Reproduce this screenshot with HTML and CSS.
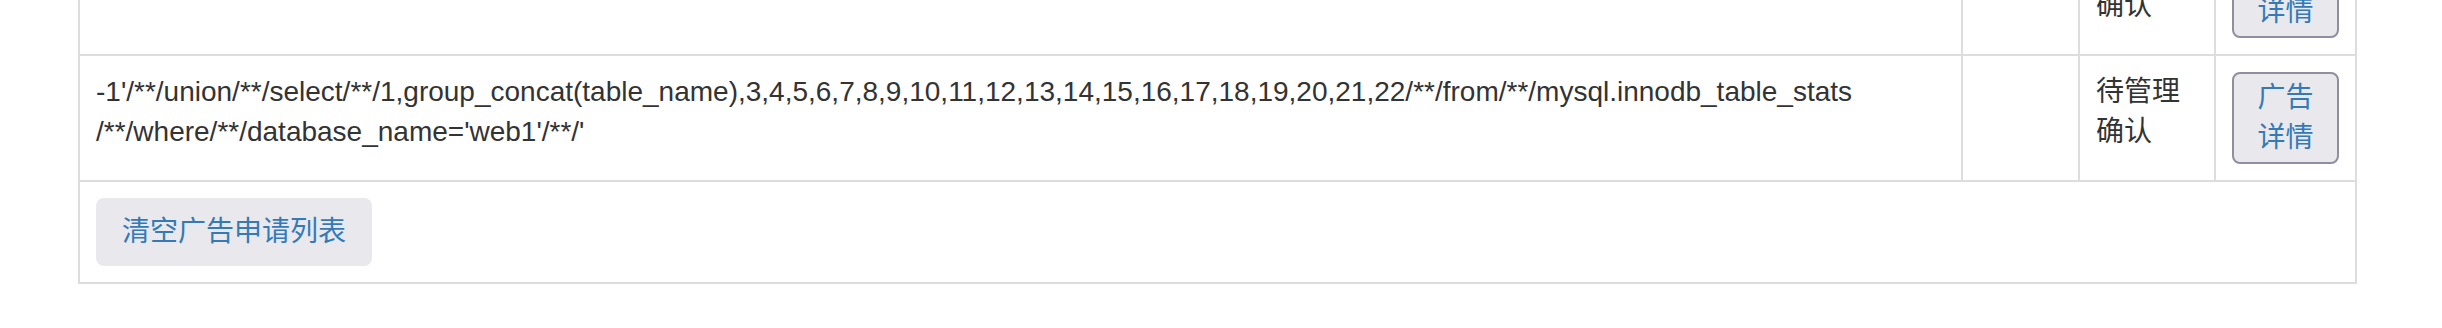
FILE: index.html
```html
<!DOCTYPE html>
<html lang="zh-CN">
<head>
<meta charset="utf-8">
<title>广告申请列表</title>
<link rel="stylesheet" href="styles.css">
</head>
<body>
<div class="page">
  <table class="ads">
    <colgroup>
      <col class="c-content">
      <col class="c-extra">
      <col class="c-status">
      <col class="c-action">
    </colgroup>
    <tbody>
      <tr>
        <td class="payload"></td>
        <td></td>
        <td class="status">待管理确认</td>
        <td><button class="detail" type="button">广告详情</button></td>
      </tr>
      <tr>
        <td class="payload"><span class="line">-1'/**/union/**/select/**/1,group_concat(table_name),3,4,5,6,7,8,9,10,11,12,13,14,15,16,17,18,19,20,21,22/**/from/**/mysql.innodb_table_stats</span><br><span class="line">/**/where/**/database_name='web1'/**/'</span></td>
        <td></td>
        <td class="status">待管理确认</td>
        <td><button class="detail" type="button">广告详情</button></td>
      </tr>
      <tr>
        <td class="foot" colspan="4"><button class="clear" type="button">清空广告申请列表</button></td>
      </tr>
    </tbody>
  </table>
</div>
</body>
</html>
```
FILE: styles.css
```css
html, body {
  margin: 0;
  padding: 0;
  background: #fff;
}
body {
  font-family: "Liberation Sans", "Noto Sans CJK SC", sans-serif;
  font-size: 28px;
  line-height: 40px;
  color: #333;
  overflow: hidden;
}
.page {
  padding-left: 78px;
}
.ads {
  width: 2279px;
  margin-top: -72px;
  border-collapse: collapse;
  table-layout: fixed;
  border: 2px solid #ddd;
}
.c-content { width: 1883px; }
.c-extra { width: 117px; }
.c-status { width: 136px; }
.c-action { width: 141px; }
.ads td {
  border: 2px solid #ddd;
  padding: 16px;
  vertical-align: top;
}
.line {
  white-space: nowrap;
}
.detail {
  font-family: inherit;
  font-size: 28px;
  line-height: 40px;
  color: #337ab7;
  background: #e9e9ed;
  border: 2px solid #8f8f9d;
  border-radius: 8px;
  padding: 4px 12px;
  margin: 0;
  text-align: center;
  cursor: pointer;
}
.clear {
  font-family: inherit;
  font-size: 28px;
  line-height: 40px;
  color: #337ab7;
  background: #e9e9ed;
  border: 2px solid transparent;
  border-radius: 8px;
  padding: 12px 24px;
  margin: 0;
  cursor: pointer;
}
```
